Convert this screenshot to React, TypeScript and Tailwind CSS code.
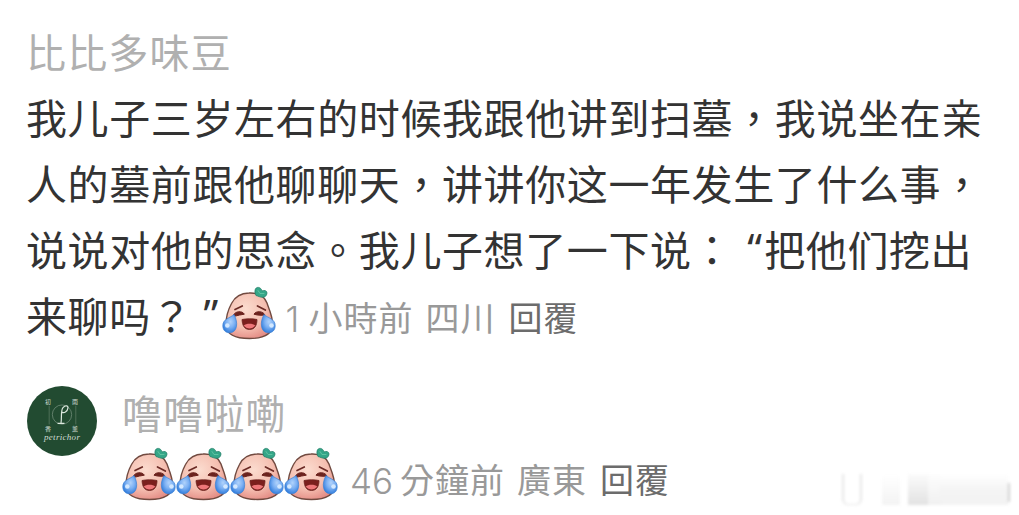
import { useId } from 'react'

const LINES = ['我儿子三岁左右的时候我跟他讲到扫墓，我说坐在亲', '人的墓前跟他聊聊天，讲讲你这一年发生了什么事，']

function LaughCry() {
  const id = useId()
  return (
    <svg className="block h-[54px] w-[54px] shrink-0" viewBox="0 0 54 54">
      <defs>
        <radialGradient id={id + 'skin'} cx="0.42" cy="0.35" r="0.7">
          <stop offset="0" stopColor="#fbdccf" />
          <stop offset="0.6" stopColor="#f5bfb1" />
          <stop offset="1" stopColor="#e38a83" />
        </radialGradient>
        <radialGradient id={id + 'tear'} cx="0.55" cy="0.4" r="0.6">
          <stop offset="0" stopColor="#b0d2fb" />
          <stop offset="0.5" stopColor="#7db1f3" />
          <stop offset="1" stopColor="#3580de" />
        </radialGradient>
      </defs>
      <path
        d="M27 7C36 6.500 42 9.500 45 17C46.500 22 50.500 29 50.500 38C50.500 48 42 52.500 27.500 52.500C13 52.500 4 48 4 38.500C4 31 6.500 23 9.500 17.500C13 10.500 19 7.200 27 7Z"
        fill={`url(#${id}skin)`}
        stroke="#714a40"
        strokeWidth="1.4"
      />
      <path
        d="M34 9.500C32.500 7 32.500 3 34.500 1.800C37 .5 39.500 2.500 40 5C42 3.800 45 4.500 45 7C44.800 10 42.500 11.500 40.500 11.300C38 11.300 36 10 34 9.500Z"
        fill="#35a688"
        stroke="#23806a"
        strokeWidth=".8"
      />
      <path d="M36 4.500L38 7.500L42 7.500" fill="none" stroke="#63c5a5" strokeWidth=".9" strokeLinecap="round" />
      <path d="M13 23.500L20.300 20M35.500 20L43.300 24" stroke="#6b2a25" strokeWidth="1.700" strokeLinecap="round" />
      <path
        d="M11.500 29.200C13 25 20.500 24.500 22.300 28.200C19 29 16 29 13.500 30ZM32 28.200C34 24.500 41.500 25 43 29.200C40 29.300 36 29.500 32 28.200Z"
        fill="#6c231e"
        stroke="#6c231e"
        strokeLinejoin="round"
      />
      <path d="M20 33.500C24 32.600 31 32.600 35 33.500C35 39.500 32.500 43.500 27.500 43.500C22.500 43.500 20.300 39.500 20 33.500Z" fill="#7b1f1d" stroke="#6c231e" strokeWidth=".8" />
      <path d="M21.800 39.500C24 37 31 37 33.200 39.500C30.500 43.500 24.500 43.500 21.800 39.500Z" fill="#ee7779" />
      <path
        d="M12 28.500C8 32 .8 33 .8 39.500C.8 44.500 4 47 7.800 46.800C15.500 46.400 16.500 36.500 12 28.500Z"
        fill={`url(#${id}tear)`}
        stroke="#3f83d4"
        strokeWidth=".7"
      />
      <path
        d="M42 28.500C46 32 53.200 33 53.200 39.500C53.200 44.500 50 47 46.200 46.800C38.500 46.400 37.500 36.500 42 28.500Z"
        fill={`url(#${id}tear)`}
        stroke="#3f83d4"
        strokeWidth=".7"
      />
      <circle cx="5.300" cy="39.500" r="2.300" fill="#d3e8ff" />
      <circle cx="49.500" cy="39.500" r="2.300" fill="#d3e8ff" />
    </svg>
  )
}

function Avatar() {
  return (
    <div className="relative ml-px h-[70px] w-[70px] shrink-0 rounded-full bg-[#224b31] text-[#d0ddd3]">
      <svg className="absolute inset-0" viewBox="0 0 71 71">
        <circle cx="35.500" cy="29" r="9.800" fill="none" stroke="#7c9683" strokeWidth=".7" />
        <path d="M22.500 20V39M49.500 20V39" stroke="#6c8874" strokeWidth=".6" />
        <path
          d="M34.500 37.500C35.500 31 34 25 36.500 22C38.500 19.500 42 19 41.500 22.500C41 26 37.500 28 35 26.500M31 38H38"
          fill="none"
          stroke="#dce8de"
          strokeWidth="1.200"
        />
      </svg>
      <div className="absolute top-[12px] left-[18px] flex w-[33px] justify-between text-[6px] leading-[8px]">
        <span>初</span>
        <span>雨</span>
      </div>
      <div className="absolute top-[39px] left-[18px] flex w-[33px] justify-between text-[6px] leading-[7px]">
        <span>香</span>
        <span>薰</span>
      </div>
      <span className="absolute top-[47px] left-[17px] text-[9px] leading-[9px] tracking-[0.3px] italic [font-family:'Liberation_Serif',serif]">
        petrichor
      </span>
    </div>
  )
}

function Watermark() {
  return (
    <div className="absolute top-[474px] left-[842px] flex h-[31px] w-[168px] items-end blur-[1.5px]">
      <div className="h-[31px] w-[20px] rounded-b-md border-x-2 border-b border-[#e6e6e6] bg-white" />
      <div className="ml-5 h-[31px] w-[18px] bg-linear-to-b from-white to-[#f3f3f3]" />
      <div className="ml-2 h-[31px] w-[20px] bg-linear-to-b from-[#fbfbfb] to-[#e2e2e2]" />
      <div className="h-[31px] w-[12px] bg-linear-to-b from-[#fdfdfd] to-[#f0f0f0]" />
      <div className="h-[31px] w-[68px] bg-linear-to-b from-white via-[#f4f4f4] to-[#f2f2f2]" />
      <div className="mb-[3px] h-[19px] w-[2px] bg-[#d0d0d0]" />
    </div>
  )
}

type MetaProps = { count: string; unit: string; place: string; width: string }

function Meta({ count, unit, place, width }: MetaProps) {
  return (
    <div className="flex text-[34px] leading-[54px] tracking-[1px] whitespace-nowrap text-[#999]">
      <span className={`${width} pt-[2px] text-[35px] font-light tracking-normal [font-family:Inter,sans-serif]`}>{count}</span>
      <span>{unit}</span>
      <span className="ml-[12px]">{place}</span>
      <span className="ml-[13px] text-[#6c6c6c]">回覆</span>
    </div>
  )
}

export default function App() {
  return (
    <main className="relative h-[515px] w-[1019px] overflow-hidden bg-white pl-[26px] [font-family:'Noto_Sans_CJK_TC',sans-serif]">
      <h2 className="h-[83px] pt-[21px] text-[40px] leading-[60px] tracking-[1.2px] text-[#b0b0b0]">比比多味豆</h2>
      <div className="text-[41px] leading-[66px] tracking-[0.6px] whitespace-nowrap text-[#333]">
        {LINES.map((line) => (
          <p key={line}>{line}</p>
        ))}
        <p className="flex">
          <span>说说对他的思念。我儿子想了一下说：</span>
          <span className="ml-[14px] w-[17px] [font-family:'Noto_Sans',sans-serif]">“</span>
          <span>把他们挖出</span>
        </p>
        <div className="flex h-[66px]">
          <span>来聊吗？</span>
          <span className="ml-[11px] w-[19px] [font-family:'Noto_Sans',sans-serif]">”</span>
          <div className="mt-[5px]">
            <LaughCry />
          </div>
          <div className="mt-[9px] ml-[9px]">
            <Meta count="1" unit="小時前" place="四川" width="w-[23px]" />
          </div>
        </div>
      </div>
      <section className="mt-[39px] flex">
        <Avatar />
        <div className="ml-[25px]">
          <h3 className="h-[61px] text-[40px] leading-[52px] tracking-[1.2px] text-[#b0b0b0]">噜噜啦嘞</h3>
          <div className="flex">
            {[0, 1, 2, 3].map((n) => (
              <LaughCry key={n} />
            ))}
            <div className="mt-[5px] ml-[12px]">
              <Meta count="46" unit="分鐘前" place="廣東" width="w-[50px]" />
            </div>
          </div>
        </div>
      </section>
      <Watermark />
    </main>
  )
}
